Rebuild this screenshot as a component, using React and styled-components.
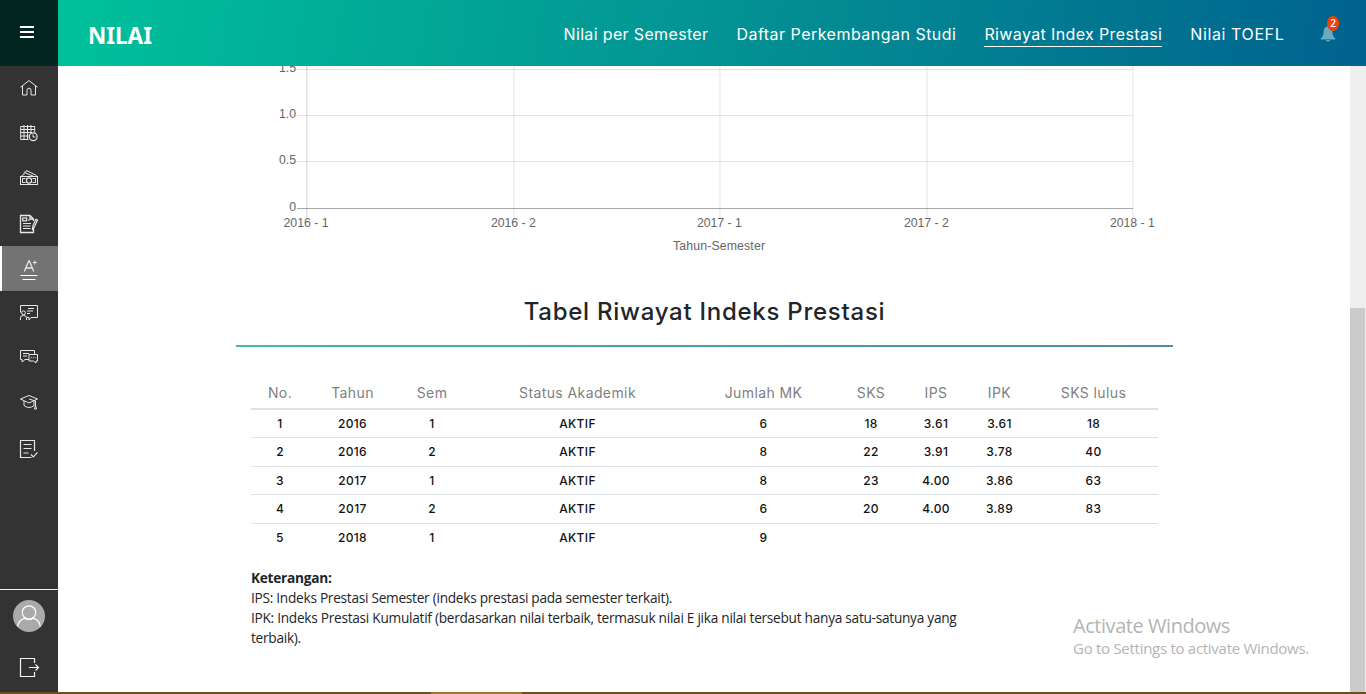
import React from 'react';
import styled, { createGlobalStyle } from 'styled-components';

const display = '"Inter", "Liberation Sans", sans-serif';
const body = '"Open Sans", "Noto Sans", sans-serif';

const GlobalStyle = createGlobalStyle`
  * { box-sizing: border-box; }
  body { margin: 0; background: #fff; overflow: hidden; }
`;

const Screen = styled.div`
  display: flex;
  flex-direction: column;
  width: 1366px;
  height: 694px;
  overflow: hidden;
`;

const Frame = styled.div`
  display: flex;
  height: 692px;
`;

const Taskbar = styled.div`
  height: 2px;
  padding-left: 431px;
  background: #6b4f22;
`;

const TaskbarActive = styled.div`
  width: 91px;
  height: 2px;
  background: #a0782a;
`;

const Sidebar = styled.aside`
  display: flex;
  flex-direction: column;
  width: 58px;
  background: #333;
`;

const MenuButton = styled.div`
  display: flex;
  flex-direction: column;
  gap: 3px;
  height: 66px;
  padding: 26px 0 0 20px;
  background: #00261f;
`;

const MenuBar = styled.span`
  width: 14px;
  height: 2px;
  background: #fff;
`;

const SideNav = styled.nav`
  flex: 1;
`;

const SideItem = styled.div`
  display: flex;
  height: 45px;
  padding: 11px 0 0 ${(p) => (p.$active ? 16 : 18)}px;
  border-left: ${(p) => (p.$active ? '2px solid #fff' : '0')};
  background: ${(p) => (p.$active ? '#737373' : 'transparent')};
`;

const SideIcon = styled.svg`
  width: 22px;
  height: 24px;
  fill: none;
  stroke: #e8e8e8;
  stroke-width: 1;
`;

const SideFooter = styled.div`
  display: flex;
  flex-direction: column;
  align-items: center;
  gap: 25px;
  height: 103px;
  padding: 10px 1px 0 0;
  border-top: 1px solid #f2f2f2;
`;

const Avatar = styled.svg`
  width: 32px;
  height: 32px;
  fill: none;
  stroke: #fff;
  stroke-width: 1.2;
`;

const LogoutIcon = styled.svg`
  width: 22px;
  height: 20px;
  fill: none;
  stroke: #f4f4f4;
  stroke-width: 1.2;
`;

const Main = styled.main`
  display: flex;
  flex-direction: column;
  width: 1308px;
`;

const Header = styled.header`
  display: flex;
  align-items: center;
  height: 66px;
  padding: 0 30px 0 30px;
  background: linear-gradient(100deg, #00c19b 0%, #038f93 54%, #00628f 100%);
`;

const PageName = styled.h1`
  flex: 1;
  margin: 5px 0 0;
  font: 700 22.5px/32px "Noto Sans", sans-serif;
  color: #fff;
`;

const Tabs = styled.nav`
  display: flex;
  gap: 28px;
  padding-top: 3px;
`;

const Tab = styled.a`
  height: 24px;
  border-bottom: 1px solid ${(p) => (p.$active ? '#fff' : 'transparent')};
  font: 400 16px/23px ${display};
  letter-spacing: ${(p) => p.$spacing}px;
  color: #fff;
  white-space: nowrap;
`;

const BellWrap = styled.div`
  position: relative;
  width: 16px;
  height: 20px;
  margin: 0 0 0 35.7px;
`;

const BellIcon = styled.svg`
  display: block;
  width: 16px;
  height: 20px;
  fill: #6ba9bd;
`;

const Badge = styled.span`
  position: absolute;
  top: -7px;
  left: 7px;
  width: 12px;
  height: 15px;
  border-radius: 50%;
  background: #ee4408;
  font: 600 10px/15px ${body};
  color: #fff;
  text-align: center;
`;

const Viewport = styled.div`
  display: flex;
  height: 626px;
`;

const Page = styled.div`
  position: relative;
  width: 1292px;
  padding-left: 178px;
  background: #fff;
`;

const ScrollTrack = styled.div`
  width: 16px;
  padding: 242px 1px 0 0;
  background: #efefef;
`;

const ScrollThumb = styled.div`
  height: 384px;
  background: #cbcbcb;
`;

const Chart = styled.svg`
  display: block;
  width: 937px;
  height: 194px;
  font: 12.3px "Liberation Sans", sans-serif;
  fill: #666;
`;

const SectionTitle = styled.h2`
  width: 937px;
  margin: 0;
  padding-top: 36px;
  height: 85px;
  font: 500 24px/32px ${display};
  letter-spacing: 0.74px;
  color: #212529;
  text-align: center;
`;

const Divider = styled.div`
  width: 937px;
  height: 2px;
  background: linear-gradient(90deg, #45b9a4, #4f8c9e);
`;

const Table = styled.div`
  width: 907px;
  margin: 31px 0 0 15px;
`;

const Row = styled.div`
  display: grid;
  grid-template-columns: 58px 87px 72px 219px 153px 62px 68px 59px 129px;
  height: 28.4px;
  border-bottom: ${(p) => (p.$last ? '0' : '1px solid #dee2e6')};
  font: 500 12px/28px ${display};
  letter-spacing: 0.35px;
  color: #111;
  text-align: center;
`;

const HeadRow = styled(Row)`
  height: 32px;
  border-bottom: 2px solid #dee2e6;
  font: 400 14px/29px ${display};
  letter-spacing: 0.4px;
  color: #808080;
`;

const Notes = styled.div`
  margin: 15.6px 0 0 15px;
  font: 400 13.7px/20px ${body};
  letter-spacing: -0.28px;
  color: #212529;
  white-space: nowrap;
`;

const NotesTitle = styled.strong`
  display: block;
  font-weight: 700;
`;

const Note = styled.div``;

const Watermark = styled.div`
  position: absolute;
  left: 1015px;
  top: 546px;
  color: #b4b4b4;
  white-space: nowrap;
`;

const WatermarkTitle = styled.div`
  font: 400 20px/28px ${body};
  letter-spacing: -0.45px;
`;

const WatermarkText = styled.div`
  margin-top: -1px;
  font: 400 15px/18px ${body};
  letter-spacing: -0.28px;
`;

const icons = {
  home: (
    <path d="M2.5 10.3 11 3.5l8.5 6.8M4.500 9v9H9v-4.800a2 2 0 0 1 4 0V18h4.500V9" />
  ),
  schedule: (
    <>
      <path d="M10.500 17.500H2.700V4.500h14v6M2.700 7.500h14M2.700 10.500h11M2.700 14h8M6 3v14.500M9.500 3v14.500M13 3v8" />
      <circle cx="15.200" cy="14.700" r="3.900" strokeWidth="1.200" />
      <path d="M15 12.500v2.500h2.300" />
    </>
  ),
  money: (
    <>
      <rect x="2.500" y="9.500" width="17" height="8" />
      <path d="M7.500 11.500h-3v4h3M14.500 11.500h3v4h-3" />
      <circle cx="11" cy="13.500" r="2.600" strokeWidth="1.200" />
      <path d="M3.500 9 7.500 6.200M5.500 6l1.800-1.500M7.500 6 8.500 3.500 18.500 8.500M8 6.200l7 2.800" />
    </>
  ),
  registration: (
    <>
      <path d="M15.500 15.500v5h-13v-17H12l3.500 3.500v2M12 3.500V7h3.500" strokeWidth="1.300" />
      <rect x="4.700" y="6" width="4" height="2.800" strokeWidth="1.200" />
      <path d="M5 11.500h8M5 14h7.500M5 16.500h7.500M10 8h2" />
      <path d="m14.300 18 .6-4 3-6.700 1.600.8-3 6.700z" strokeWidth="1.200" />
    </>
  ),
  grades: (
    <>
      <path d="m6.300 14.500 4.500-10.700h.5l4.500 10.700M8 11h6.200" strokeWidth="1.300" />
      <path d="M16.800 3.500v4M14.800 5.500h4" />
      <path d="M2.500 18.500h17M4.500 22.500h13" strokeWidth="1.200" stroke="#fff" />
    </>
  ),
  guidance: (
    <>
      <path d="M2.500 10.500v-7h17v12H13l-2 2.500v-2.500H9" />
      <circle cx="5.500" cy="10.800" r="1.900" />
      <path d="M2.500 18v-2.500q0-2 3-2t3 2V18M10 6.500h6M9 9h6M9 11.500h3" />
    </>
  ),
  chat: (
    <>
      <path d="M16.500 7V3.500h-14v9h1.500v2.500L7 12.500h4M5 6.500h6M5 9h4" />
      <path d="M11 7.500h8.500v6.500H18v2L15.500 14H11z" />
      <path d="M12.800 10.700h1M14.800 10.700h1M16.800 10.700h1" />
    </>
  ),
  graduation: (
    <>
      <path d="M2.500 7 11 3.500 19.500 7 11 11z" />
      <path d="M6 9v4.500q5 4 10 0V9M11 7l6.500 2v4M17.500 13l-1 4h2z" />
    </>
  ),
  survey: (
    <>
      <path d="M16.500 14V3.500h-14v17h11" strokeWidth="1.200" />
      <path d="M5.500 7.500h8M5.500 11.500h8M5.500 16h5M13 17.500l2.300 2.300 4.200-4.500" strokeWidth="1.200" />
    </>
  ),
};

const tabs = [
  { label: 'Nilai per Semester', spacing: 0.35 },
  { label: 'Daftar Perkembangan Studi', spacing: 0.48 },
  { label: 'Riwayat Index Prestasi', spacing: 0.37, active: true },
  { label: 'Nilai TOEFL', spacing: 0.6 },
];

const columns = ['No.', 'Tahun', 'Sem', 'Status Akademik', 'Jumlah MK', 'SKS', 'IPS', 'IPK', 'SKS lulus'];

const rows = [
  ['1', '2016', '1', 'AKTIF', '6', '18', '3.61', '3.61', '18'],
  ['2', '2016', '2', 'AKTIF', '8', '22', '3.91', '3.78', '40'],
  ['3', '2017', '1', 'AKTIF', '8', '23', '4.00', '3.86', '63'],
  ['4', '2017', '2', 'AKTIF', '6', '20', '4.00', '3.89', '83'],
  ['5', '2018', '1', 'AKTIF', '9', '', '', '', ''],
];

const yTicks = [
  { label: '1.5', y: 3 },
  { label: '1.0', y: 49 },
  { label: '0.5', y: 95 },
  { label: '0', y: 142 },
];

const xTicks = [
  { label: '2016 - 1', x: 70 },
  { label: '2016 - 2', x: 277.4 },
  { label: '2017 - 1', x: 483.4 },
  { label: '2017 - 2', x: 690.4 },
  { label: '2018 - 1', x: 896.4 },
];

function HistoryChart() {
  return (
    <Chart viewBox="0 0 937 194">
      {yTicks.map((t) => (
        <g key={t.label}>
          <rect x="61" y={t.y} width="836" height="1" fill={t.label === '0' ? '#a8a8a8' : '#e3e3e3'} />
          <text x="60" y={t.y + 3} textAnchor="end">{t.label}</text>
        </g>
      ))}
      {xTicks.map((t, i) => (
        <g key={t.label}>
          <rect x={t.x} y="0" width={i === 0 ? 1.5 : 1} height="152" fill="#000" fillOpacity="0.11" />
          <text x={t.x} y="161" textAnchor="middle" textLength="45">{t.label}</text>
        </g>
      ))}
      <text x="483" y="184" textAnchor="middle" textLength="92">Tahun-Semester</text>
    </Chart>
  );
}

export default function App() {
  return (
    <Screen>
      <GlobalStyle />
      <Frame>
        <Sidebar>
          <MenuButton>
            <MenuBar />
            <MenuBar />
            <MenuBar />
          </MenuButton>
          <SideNav>
            {Object.entries(icons).map(([name, drawing]) => (
              <SideItem key={name} $active={name === 'grades'}>
                <SideIcon viewBox="0 0 22 24">{drawing}</SideIcon>
              </SideItem>
            ))}
          </SideNav>
          <SideFooter>
            <Avatar viewBox="0 0 32 32">
              <circle cx="16" cy="16" r="16" fill="#aaa" stroke="none" />
              <circle cx="16" cy="12.500" r="6.700" />
              <path d="M4.700 26.500q.8-6.500 6.800-8.200 4.500 2.600 9 0 6 1.700 6.800 8.200" />
            </Avatar>
            <LogoutIcon viewBox="0 0 22 20">
              <path d="M16.500 6V1.500h-14v18h14V15M11 10.500h9.500M17.500 7.500l3 3-3 3" />
            </LogoutIcon>
          </SideFooter>
        </Sidebar>
        <Main>
          <Header>
            <PageName>NILAI</PageName>
            <Tabs>
              {tabs.map((t) => (
                <Tab key={t.label} $active={t.active} $spacing={t.spacing}>{t.label}</Tab>
              ))}
            </Tabs>
            <BellWrap>
              <BellIcon viewBox="0 0 16 20">
                <path d="M8 3.500c-2.800 0-4.300 2-4.300 4.500 0 4-.9 5.500-3 7.500v1h14.600v-1c-2.100-2-3-3.500-3-7.500 0-2.500-1.500-4.500-4.300-4.500zM6 17a2 1.500 0 0 0 4 0z" />
              </BellIcon>
              <Badge>2</Badge>
            </BellWrap>
          </Header>
          <Viewport>
            <Page>
              <HistoryChart />
              <SectionTitle>Tabel Riwayat Indeks Prestasi</SectionTitle>
              <Divider />
              <Table>
                <HeadRow>
                  {columns.map((c) => <span key={c}>{c}</span>)}
                </HeadRow>
                {rows.map((r, i) => (
                  <Row key={r[0]} $last={i === rows.length - 1}>
                    {r.map((v, j) => <span key={columns[j]}>{v}</span>)}
                  </Row>
                ))}
              </Table>
              <Notes>
                <NotesTitle>Keterangan:</NotesTitle>
                <Note>IPS: Indeks Prestasi Semester (indeks prestasi pada semester terkait).</Note>
                <Note>IPK: Indeks Prestasi Kumulatif (berdasarkan nilai terbaik, termasuk nilai E jika nilai tersebut hanya satu-satunya yang</Note>
                <Note>terbaik).</Note>
              </Notes>
              <Watermark>
                <WatermarkTitle>Activate Windows</WatermarkTitle>
                <WatermarkText>Go to Settings to activate Windows.</WatermarkText>
              </Watermark>
            </Page>
            <ScrollTrack>
              <ScrollThumb />
            </ScrollTrack>
          </Viewport>
        </Main>
      </Frame>
      <Taskbar>
        <TaskbarActive />
      </Taskbar>
    </Screen>
  );
}
